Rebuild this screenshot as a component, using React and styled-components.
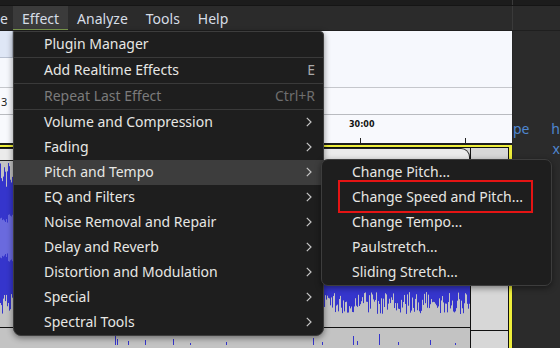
import React from 'react';
import styled, { createGlobalStyle } from 'styled-components';

const GlobalStyle = createGlobalStyle`
  html, body {
    margin: 0;
    padding: 0;
    background: #2b2b2b;
  }
  body {
    font-family: "Noto Sans", "DejaVu Sans", sans-serif;
  }
`;

// Layout

const Screen = styled.div`
  position: relative;
  width: 560px;
  height: 348px;
  overflow: hidden;
  display: flex;
  flex-direction: column;
  background: #2b2b2b;
`;

const TopStrip = styled.div`
  height: 5px;
  background: #1c1c1c;
  border-bottom: 1px solid #151515;
  display: flex;
  justify-content: flex-end;
`;

const TopStripRight = styled.div`
  width: 47px;
  border-left: 1px solid #3a3a3a;
`;

const MenuBar = styled.div`
  height: 24px;
  display: flex;
  background: #2b2b2b;
  border-bottom: 1px solid #1f1f1f;
`;

const MenuBarItem = styled.div`
  display: flex;
  align-items: center;
  padding: 0 ${(p) => p.$pad || 9}px;
  font-size: 14px;
  color: #d6dde6;
  background: ${(p) => (p.$active ? '#3b3b3b' : 'transparent')};
  box-shadow: ${(p) => (p.$active ? 'inset 0 -1px 0 #7f9d4f' : 'none')};
  white-space: nowrap;
`;

const ClippedItem = styled(MenuBarItem)`
  width: 13px;
  box-sizing: border-box;
  padding: 0 5px 0 0;
  justify-content: flex-end;
`;

const MenuBarFill = styled.div`
  flex: 1;
`;

const MenuBarRight = styled.div`
  width: 47px;
  border-left: 1px solid #3a3a3a;
`;

const Body = styled.div`
  flex: 1;
  display: flex;
  min-height: 0;
`;

const Workspace = styled.div`
  width: 512px;
  display: flex;
  flex-direction: column;
`;

const SidePanel = styled.div`
  flex: 1;
  background: #2b2b2b;
  border-left: 1px solid #262626;
  padding: 88px 0 0 0;
  display: flex;
  flex-direction: column;
`;

const SideLine = styled.div`
  display: flex;
  justify-content: ${(p) => (p.$end ? 'flex-end' : 'space-between')};
  font-size: 14px;
  line-height: 20px;
  color: #4f86d0;
  white-space: nowrap;
  overflow: hidden;
`;

const ToolArea = styled.div`
  height: 56px;
  background: #f6f8fd;
  border-bottom: 1px solid #c5c7cc;
  display: flex;
  flex-direction: column;
`;

const ToolButton = styled.div`
  width: 12px;
  height: 26px;
  background: #dfe7f6;
  border-right: 1px solid #b8c0d0;
  border-bottom: 1px solid #b8c0d0;
`;

const ToolRow = styled.div`
  height: 26px;
  background: #f8f9fd;
  border-bottom: 1px solid #b9bbc0;
  display: flex;
  align-items: center;
  padding-left: 1px;
  font-size: 11px;
  color: #222;
`;

const Ruler = styled.div`
  position: relative;
  height: 28px;
  background: #f8f9fd;
  border-bottom: 2px solid #1e1e1e;
`;

const RulerLabel = styled.span`
  position: absolute;
  left: 349px;
  top: 5px;
  font-family: "DejaVu Sans", sans-serif;
  font-size: 8px;
  font-weight: bold;
  color: #111;
`;

const Tick = styled.div`
  position: absolute;
  bottom: 0;
  left: ${(p) => p.$x}px;
  width: 1px;
  height: 5px;
  background: #222;
`;

const Track = styled.div`
  flex: 1;
  display: flex;
  background: #d7d7d7;
  border-top: 2px solid #eeee3a;
  border-right: 3px solid #eeee3a;
  box-shadow: inset -1px 1px 0 #111;
  min-height: 0;
`;

const Clip = styled.div`
  width: 470px;
  display: flex;
  flex-direction: column;
  border-right: 1px solid #111;
  margin-top: 1px;
`;

const ClipHeader = styled.div`
  height: 11px;
  background: #ebebeb;
  border: 1px solid #222;
  border-left: none;
  border-radius: 0 9px 0 0;
`;

const Channel = styled.div`
  height: ${(p) => p.$h}px;
  background: #c3c3c3;
  border-bottom: ${(p) => (p.$divider ? '1px solid #111' : 'none')};
  overflow: hidden;
`;

const EmptyLane = styled.div`
  flex: 1;
  display: flex;
  flex-direction: column;
  padding-top: 14px;
`;

const EmptyChannel = styled.div`
  height: ${(p) => p.$h}px;
  border-bottom: 1px solid #111;
`;

// Menus

const Menu = styled.div`
  position: absolute;
  left: ${(p) => p.$x}px;
  top: ${(p) => p.$y}px;
  width: ${(p) => p.$w}px;
  background: #1e1e1e;
  border: 1px solid #3d3d3d;
  border-radius: ${(p) => p.$radius};
  box-shadow: 0 2px 6px rgba(0, 0, 0, 0.45);
  display: flex;
  flex-direction: column;
  overflow: hidden;
`;

const Item = styled.div`
  height: 25px;
  box-sizing: border-box;
  display: flex;
  align-items: center;
  padding: 0 11px 2px 30px;
  font-size: 14px;
  color: ${(p) => (p.$disabled ? '#7b7b7b' : '#e7e7e4')};
  background: ${(p) => (p.$hover ? '#3d3d3d' : 'transparent')};
  white-space: nowrap;
`;

const Label = styled.span`
  flex: 1;
`;

const Shortcut = styled.span`
  margin-right: -3px;
  color: ${(p) => (p.$disabled ? '#6e6e6e' : '#a9a9a9')};
  font-size: 14px;
`;

const Separator = styled.div`
  height: 1px;
  background: #3a3a3a;
`;

const Highlight = styled.div`
  position: absolute;
  left: 338px;
  top: 180px;
  width: 195px;
  height: 33px;
  box-sizing: border-box;
  border: 2px solid #e41414;
`;

const Chevron = () => (
  <svg width="6" height="10" viewBox="0 0 6 10">
    <polyline points="0.8,0.8 5,5 0.8,9.2" fill="none" stroke="#c4c4c4" strokeWidth="1.2" />
  </svg>
);

// deterministic noise for the waveform
const rand = (() => {
  let s = 1234567;
  return () => {
    s = (s * 1103515245 + 12345) % 2147483648;
    return s / 2147483648;
  };
})();

const bars = Array.from({ length: 470 }, (_, x) => {
  const amp = 50 + rand() * 26;
  const down = 54 + rand() * 22;
  const rms = 14 + rand() * 10;
  return { x, amp, down, rms };
});

const lowSpikes = [
  [115, 15], [117, 6], [128, 4], [145, 5], [173, 6], [190, 2], [226, 3],
  [313, 7], [322, 3], [353, 9], [357, 4], [379, 11], [398, 3], [430, 5], [455, 2],
];

const Waveform = ({ height }) => {
  const c = 77;
  return (
    <svg width="470" height={height} viewBox={`0 0 470 ${height}`}>
      {bars.map((b) => (
        <line key={b.x} x1={b.x + 0.5} x2={b.x + 0.5} y1={c - b.amp} y2={c + b.down} stroke="#3535cc" strokeWidth="1" />
      ))}
      {bars.map((b) => (
        <line key={'r' + b.x} x1={b.x + 0.5} x2={b.x + 0.5} y1={c - b.rms} y2={c + b.rms} stroke="#6a6ade" strokeWidth="1" />
      ))}
    </svg>
  );
};

const LowerWave = ({ height }) => (
  <svg width="470" height={height} viewBox={`0 0 470 ${height}`}>
    {lowSpikes.map(([x, h]) => (
      <line key={x} x1={x + 0.5} x2={x + 0.5} y1={height - h} y2={height} stroke="#3535cc" strokeWidth="1" />
    ))}
  </svg>
);

const mainItems = [
  { label: 'Plugin Manager', sep: true },
  { label: 'Add Realtime Effects', shortcut: 'E', sep: true },
  { label: 'Repeat Last Effect', shortcut: 'Ctrl+R', disabled: true, sep: true },
  { label: 'Volume and Compression', sub: true },
  { label: 'Fading', sub: true },
  { label: 'Pitch and Tempo', sub: true, hover: true },
  { label: 'EQ and Filters', sub: true },
  { label: 'Noise Removal and Repair', sub: true },
  { label: 'Delay and Reverb', sub: true },
  { label: 'Distortion and Modulation', sub: true },
  { label: 'Special', sub: true },
  { label: 'Spectral Tools', sub: true },
];

const subItems = [
  'Change Pitch...',
  'Change Speed and Pitch...',
  'Change Tempo...',
  'Paulstretch...',
  'Sliding Stretch...',
];

export default function App() {
  return (
    <Screen>
      <GlobalStyle />
      <TopStrip>
        <TopStripRight />
      </TopStrip>
      <MenuBar>
        <ClippedItem>e</ClippedItem>
        <MenuBarItem $active>Effect</MenuBarItem>
        <MenuBarItem>Analyze</MenuBarItem>
        <MenuBarItem>Tools</MenuBarItem>
        <MenuBarItem>Help</MenuBarItem>
        <MenuBarFill />
        <MenuBarRight />
      </MenuBar>
      <Body>
        <Workspace>
          <ToolArea>
            <ToolButton />
          </ToolArea>
          <ToolRow>3</ToolRow>
          <Ruler>
            <RulerLabel>30:00</RulerLabel>
            <Tick $x={360} />
            <Tick $x={465} />
          </Ruler>
          <Track>
            <Clip>
              <ClipHeader />
              <Channel $h={169} $divider>
                <Waveform height={169} />
              </Channel>
              <Channel $h={20}>
                <LowerWave height={17} />
              </Channel>
            </Clip>
            <EmptyLane>
              <EmptyChannel $h={169} />
            </EmptyLane>
          </Track>
        </Workspace>
        <SidePanel>
          <SideLine>
            <span>pe</span>
            <span>h</span>
          </SideLine>
          <SideLine $end>
            <span>x</span>
          </SideLine>
        </SidePanel>
      </Body>

      <Menu $x={13} $y={31} $w={309} $radius="0 4px 8px 8px">
        {mainItems.map((it) => (
          <React.Fragment key={it.label}>
            <Item $disabled={it.disabled} $hover={it.hover}>
              <Label>{it.label}</Label>
              {it.shortcut && <Shortcut $disabled={it.disabled}>{it.shortcut}</Shortcut>}
              {it.sub && <Chevron />}
            </Item>
            {it.sep && <Separator />}
          </React.Fragment>
        ))}
      </Menu>

      <Menu $x={321} $y={159} $w={229} $radius="7px">
        {subItems.map((s) => (
          <Item key={s}>
            <Label>{s}</Label>
          </Item>
        ))}
      </Menu>

      <Highlight />
    </Screen>
  );
}
